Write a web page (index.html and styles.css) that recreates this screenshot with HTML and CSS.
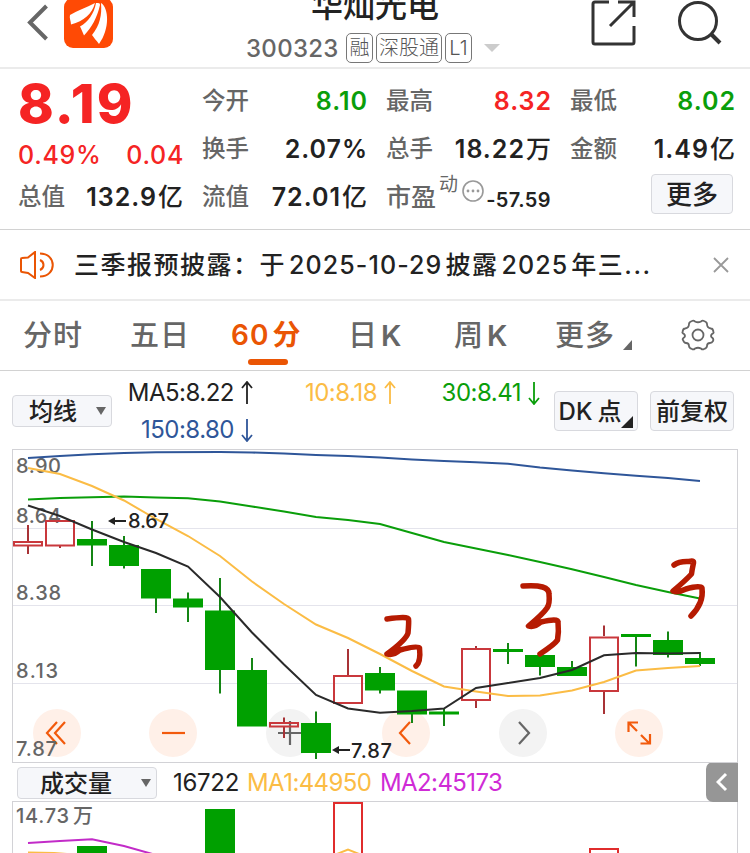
FILE: index.html
```html
<!DOCTYPE html>
<html lang="zh-CN">
<head>
  <meta charset="UTF-8" />
  <meta name="viewport" content="width=device-width, initial-scale=1.0" />
  <title>华灿光电 300323</title>
  <link rel="stylesheet" href="styles.css">
</head>
<body>
  <header class="header">
    <div class="header-left">
      <svg class="back-icon" width="22" height="38" viewBox="0 0 22 38"><path d="M19.500 2 3 18.500l16.500 16.500"/></svg>
      <svg class="logo" width="49" height="50" viewBox="0 0 49 50">
        <rect width="49" height="50" rx="9" fill="#ff4a05"/>
        <path fill="#fff" d="M6 17C14 12 22 10 31 5C28 16 20 23 7 26.500C7 23 5 20 6 17Z"/>
        <path fill="#fff" d="M32 5C35 5 36 5 36 7C33 20 28 29 20 37.500L17 30.500L16 28.500C24 24 30 16 32 5Z"/>
        <path fill="#fff" d="M37 5C45 10 46 31 35 46C32 42 30 40 28 37C36 27 38 17 37 5Z"/>
      </svg>
    </div>
    <div class="stock">
      <h1>华灿光电</h1>
      <div class="stock-sub">
        <span class="code">300323</span>
        <span class="tag">融</span>
        <span class="tag wide">深股通</span>
        <span class="tag">L1</span>
        <svg class="drop" width="16" height="8" viewBox="0 0 16 8"><path d="M0 0h16L8 8z" fill="#ccc"/></svg>
      </div>
    </div>
    <div class="header-right">
      <svg width="46" height="46" viewBox="0 0 46 46"><path d="M18 2H4Q2 2 2 4V42Q2 44 4 44H41Q43 44 43 42V26M27 2H43V17M42 3 19 26"/></svg>
      <svg width="46" height="46" viewBox="0 0 46 46"><circle cx="21" cy="21" r="18.500"/><path d="M34 34 43 43" stroke-width="4"/></svg>
    </div>
  </header>

  <section class="quote">
    <div class="price red">8.19</div>
    <div class="cell"><span>今开</span><b class="green">8.10</b></div>
    <div class="cell"><span>最高</span><b class="red">8.32</b></div>
    <div class="cell"><span>最低</span><b class="green">8.02</b></div>

    <div class="change red"><span>0.49%</span><span>0.04</span></div>
    <div class="cell"><span>换手</span><b>2.07%</b></div>
    <div class="cell"><span>总手</span><b>18.22<i>万</i></b></div>
    <div class="cell"><span>金额</span><b>1.49<i>亿</i></b></div>

    <div class="cell"><span>总值</span><b>132.9<i>亿</i></b></div>
    <div class="cell"><span>流值</span><b>72.01<i>亿</i></b></div>
    <div class="cell pe">
      <span>市盈</span><sup>动</sup>
      <svg width="22" height="22" viewBox="0 0 22 22"><circle cx="11" cy="11" r="10" fill="none" stroke="#999" stroke-width="1.600"/><g fill="#999"><circle cx="6" cy="11" r="1.400"/><circle cx="11" cy="11" r="1.400"/><circle cx="16" cy="11" r="1.400"/></g></svg>
      <b>-57.59</b>
    </div>
    <div class="cell more"><button class="btn">更多</button></div>
  </section>

  <section class="notice">
    <svg class="horn" width="34" height="28" viewBox="0 0 34 28"><path d="M1 8Q1 7 2 7L8 6.500 15 1V27L8 22 2 21Q1 21 1 20ZM20 9a6 5.500 0 0 1 0 10M20 2.500c17 0 17 23 0 23"/></svg>
    <p>三季报预披露：于<em>2025-10-29</em>披露<em>2025</em>年三...</p>
    <svg class="close" width="16" height="16" viewBox="0 0 16 16"><path d="M1 1 15 15M15 1 1 15"/></svg>
  </section>

  <nav class="tabs">
    <a>分时</a>
    <a>五日</a>
    <a class="active">60<i>分</i></a>
    <a>日<i>K</i></a>
    <a>周<i>K</i></a>
    <a class="tab-more">更多<svg width="9" height="10" viewBox="0 0 9 10"><path d="M9 0V10H0z" fill="#666"/></svg></a>
    <svg class="gear" width="34" height="32" viewBox="0 0 34 32"><path d="M11 2Q12.500 1 14 2.500Q17 4 20 2.500Q21.500 1 23 2Q26 3 26 5Q26 9 30 9.500Q32 9.500 32.500 13Q33 14 31 15Q29 17 31 18.500Q33 20 32 22Q31 24 29 24Q26 24 26 27Q26 29 23 30Q21.500 31 20 29.500Q17 28 14 29.500Q12.500 31 11 30Q8 29 8 27Q8 24 5 24Q3 24 2 21Q1 20 3 18.500Q5 17 3 15Q1 14 1.500 13Q2 9.500 4 9.500Q8 9 8 5Q8 3 11 2Z"/><circle cx="17" cy="16" r="5.500"/></svg>
  </nav>

  <section class="ma">
    <button class="btn select"><span>均线</span><svg width="10" height="8" viewBox="0 0 10 8"><path d="M0 0h10L5 8z"/></svg></button>
    <div class="ma-list">
      <span>MA5:8.22<svg width="12" height="24" viewBox="0 0 12 24"><path d="M6 23V1M1 7 6 1 11 7"/></svg></span>
      <span class="yellow">10:8.18<svg width="12" height="24" viewBox="0 0 12 24"><path d="M6 23V1M1 7 6 1 11 7"/></svg></span>
      <span class="green">30:8.41<svg width="12" height="24" viewBox="0 0 12 24"><path d="M6 1V23M1 17 6 23 11 17"/></svg></span>
      <span class="blue">150:8.80<svg width="12" height="24" viewBox="0 0 12 24"><path d="M6 1V23M1 17 6 23 11 17"/></svg></span>
    </div>
    <button class="btn dk"><span>DK<i>点</i></span><svg width="12" height="12" viewBox="0 0 12 12"><path d="M12 0V12H0z" fill="#222"/></svg></button>
    <button class="btn adj"><span>前复权</span></button>
  </section>

  <section class="chart">
    <div class="tools">
      <a><svg viewBox="0 0 48 48"><path d="M24 13 14 24 24 35M32 13 22 24 32 35"/></svg></a>
      <a><svg viewBox="0 0 48 48"><path d="M13 24H36"/></svg></a>
      <a class="grey"><svg viewBox="0 0 48 48"><path d="M12 24H36M24 12V36"/></svg></a>
      <a><svg viewBox="0 0 48 48"><path d="M28 13 18 24 28 35"/></svg></a>
      <a class="grey"><svg viewBox="0 0 48 48"><path d="M20 13 30 24 20 35"/></svg></a>
      <a><svg viewBox="0 0 48 48"><path d="M13.500 23V13.500H23M14 14 22 22M26 26 34 34M35 25V34.500H25.500"/></svg></a>
    </div>
    <svg class="kline" width="726" height="314" viewBox="12 449 726 314">
      <path class="grid" d="M13 528.500H737M13 605.500H737M13 683.500H737"/>
      <g class="axis">
        <text x="16" y="472.500" textLength="45">8.90</text>
        <text x="16" y="522.500" textLength="45">8.64</text>
        <text x="16" y="599.500" textLength="45">8.38</text>
        <text x="16" y="677.500" textLength="42">8.13</text>
        <text x="16" y="755.500" textLength="41">7.87</text>
      </g>
      <!-- falling candles -->
      <path class="wick-down" d="M92 521V566M124 536V568.500M156 569V613M188 592.500V622M220 578V693.500M252 658V726M316 711.500V759M380 667V693.500M412 691V723M444 709V726M508 643V664M540 655V675.500M572 661V675M636 634V666.500M668 631.500V657.500M700 652V666"/>
      <path class="body-down" d="M77 539h30v6.500h-30zM109 545h30v21h-30zM141 569h30v29.500h-30zM173 598.500h30v9h-30zM205 610.500h30v59.500h-30zM237 670h30v56.500h-30zM301 723h30v30h-30zM365 673h30v17.500h-30zM397 690.500h30v24h-30zM429 711.500h30v3h-30zM493 649h30v3h-30zM525 655h30v12h-30zM557 667h30v9h-30zM621 634h30v3h-30zM653 640h30v15h-30zM685 658h30v6h-30z"/>
      <!-- rising candles -->
      <path class="wick-up" d="M28 525V541M28 546V554M60 546V548M284 717.500V722M284 727V738M348 649V675M476 646V648M476 701V708M604 625.500V636M604 692V714"/>
      <path class="body-up" d="M14 542h28v3.500h-28zM46 521h28v24.500h-28zM270 723h28v3.500h-28zM334 676h28v27h-28zM462 649h28v51h-28zM590 637.500h28v53.500h-28z"/>

      <polyline class="line blue" points="28,458 60,456 92,454.200 124,453 156,452.300 220,452 252,452.500 284,453.500 316,455 348,456 380,457.500 412,459.500 444,461 476,462.300 508,463.700 540,467.500 572,470.500 604,473.300 636,475.800 668,478 700,481"/>
      <polyline class="line green" points="28,499.500 60,498 92,497.200 124,496.500 156,497.500 188,498.300 220,501.500 252,506.500 284,511.500 316,517 348,520 380,524 412,533 444,542 476,548.500 508,555 540,562 572,569.300 604,577 636,585 668,592 700,598.500"/>
      <polyline class="line yellow" points="28,468 60,474 92,486 124,500.500 156,519 188,536 220,556 252,581.500 284,604 316,624.500 348,638 380,654 412,671 444,686.500 476,691.500 508,696 540,695.500 572,690.500 604,682 636,670.500 668,668 700,666"/>
      <polyline class="line black" points="28,505.500 60,516 92,529.500 124,542 156,553 188,566.500 220,597 252,632.500 284,664.500 316,695 348,708.500 380,712.700 412,711 444,708.500 476,688 508,683 540,678 572,670 604,655.300 636,653 668,653.500 700,653"/>

      <g class="mark">
        <path d="M110 521H126M334 750H350"/>
        <path class="head" d="M108 521l7-4v8zM332 750l7-4v8z"/>
        <text x="128" y="528" textLength="41">8.67</text>
        <text x="351" y="758" textLength="41">7.87</text>
      </g>

      <g class="pen">
        <path d="M387 619Q408 616 408.500 619Q409 622 408 633Q406 640 387 654Q393 656 400 650Q418 645 419.500 648Q421 662 416 666"/>
        <path d="M523 586Q549 584 549 594Q550 604 547 608Q543 614 528.500 626Q534 628 541 622Q558 618 558 622Q559 632 557.500 640Q555 644 540 654"/>
        <path d="M674 565Q679 561 689 561.500Q694 560 693.500 563Q692 570 691.500 574Q685 581 673 591Q678 593 686 589Q700 585 702 588Q704 603 691 616"/>
      </g>
    </svg>
  </section>

  <section class="vol-bar">
    <button class="btn select"><span>成交量</span><svg width="10" height="8" viewBox="0 0 10 8"><path d="M0 0h10L5 8z"/></svg></button>
    <span class="v0">16722</span>
    <span class="v1 yellow">MA1:44950</span>
    <span class="v2">MA2:45173</span>
    <div class="expand"><svg width="12" height="20" viewBox="0 0 12 20"><path d="M10 2 2 10 10 18"/></svg></div>
  </section>

  <section class="volume">
    <svg width="726" height="52" viewBox="12 801 726 52">
      <text class="axis-text" x="16" y="822.500" textLength="53">14.73</text>
      <text class="axis-text" x="73" y="822.500">万</text>
      <path class="body-down" d="M77 846h30v7h-30zM205 809h30v44h-30z"/>
      <path class="vol-up" d="M334 854V803H362V854M590 854V849H618V854"/>
      <polyline class="line purple" points="28,843 60,841 92,839.300 124,846 156,855"/>
      <polyline class="line yellow" points="28,852.500 54,853 80,855"/>
      <polyline class="line yellow" points="332,856 348,849.500 364,856"/>
    </svg>
  </section>
</body>
</html>
```

FILE: styles.css
```css
* {
  box-sizing: border-box;
}

html, body {
  margin: 0;
  padding: 0;
  overflow: hidden;
}

body {
  width: 750px;
  height: 853px;
  background: #fff;
  color: #222;
  font-family: Inter, "Noto Sans CJK SC", sans-serif;
}

i, em {
  font-style: normal;
}

svg {
  display: block;
  flex: none;
}

.red { color: #f52424; }
.green { color: #0a9e0a; }
.yellow { color: #fbbc45; }
.blue { color: #2f5699; }

/* header */
.header {
  display: grid;
  grid-template-columns: 246px 1fr 159px;
  height: 69px;
  border-bottom: 2px solid #ebebeb;
  overflow: hidden;
}

.header-left {
  display: flex;
  padding-left: 27px;
}

.back-icon {
  margin-top: 4px;
  fill: none;
  stroke: #666;
  stroke-width: 4;
}

.logo {
  margin: -2px 0 0 15px;
}

.stock h1 {
  width: 258px;
  margin: -17px 0 0;
  font-size: 32px;
  line-height: 46px;
  font-weight: 500;
  text-align: center;
}

.stock-sub {
  display: flex;
  align-items: center;
  height: 30px;
  margin-top: 4px;
}

.code {
  width: 100px;
  font-size: 24px;
  font-weight: 500;
  letter-spacing: 0.3px;
  color: #666;
}

.tag {
  height: 30px;
  width: 27px;
  margin-right: 3px;
  border: 1px solid #777;
  border-radius: 5px;
  font-size: 20px;
  line-height: 29px;
  font-weight: 300;
  text-align: center;
  white-space: nowrap;
  color: #555;
}

.tag.wide {
  width: 66px;
}

.drop {
  margin-left: 9px;
}

.header-right {
  display: flex;
  gap: 40px;
  fill: none;
  stroke: #333;
  stroke-width: 3;
}

/* quote */
.quote {
  display: grid;
  grid-template-columns: repeat(4, 164px);
  grid-template-rows: repeat(3, 48px);
  column-gap: 20px;
  height: 161px;
  padding: 8px 0 0 19px;
  border-bottom: 1px solid #d2d2d2;
}

.price {
  margin-left: -1px;
  font-size: 54px;
  line-height: 54px;
  font-weight: 800;
  letter-spacing: 2px;
}

.change, .cell {
  display: flex;
  align-items: center;
  justify-content: space-between;
  line-height: 36px;
  white-space: nowrap;
}

.change {
  padding-top: 11px;
  margin: 0 -1px;
  font-size: 25px;
  font-weight: 500;
  letter-spacing: 0.7px;
}

.cell span {
  margin-left: -1px;
  font-size: 23.5px;
  font-weight: 500;
  color: #666;
}

.cell b {
  margin-right: -1px;
  font-size: 25px;
  font-weight: 600;
  letter-spacing: 1px;
}

.cell b i {
  margin-left: 1px;
  font-weight: 500;
}

.cell.pe {
  justify-content: flex-start;
}

.pe span {
  font-size: 25px;
}

.pe sup {
  margin: -24px 4px 0 3px;
  font-size: 19px;
  line-height: 24px;
  color: #666;
}

.pe svg {
  margin-top: -13px;
}

.pe b {
  margin: 5px 0 0 auto;
  font-size: 20px;
  letter-spacing: 0.4px;
}

.cell.more {
  justify-content: flex-end;
  padding: 0 2px 6px 0;
}

.btn {
  display: flex;
  align-items: center;
  justify-content: center;
  height: 40px;
  width: 84px;
  padding: 0;
  background: #f6f7fa;
  border: 1px solid #d8d9de;
  border-radius: 4px;
  color: #222;
  font-family: inherit;
  font-size: 24px;
  font-weight: 500;
  white-space: nowrap;
}

.btn span {
  margin-top: -3px;
}

.more .btn {
  width: 82px;
  padding-bottom: 3px;
  font-size: 26px;
}

/* notice */
.notice {
  display: flex;
  align-items: center;
  height: 71px;
  padding: 0 21px 0 20px;
  border-bottom: 2px solid #ebebeb;
}

.horn {
  fill: none;
  stroke: #ea5504;
  stroke-width: 2;
}

.notice p {
  width: 590px;
  margin: -4px auto 0 20px;
  font-size: 25px;
  font-weight: 500;
  letter-spacing: 1.5px;
  white-space: nowrap;
}

.notice em {
  margin: 0 3px;
  letter-spacing: 1.1px;
}

.close {
  stroke: #999;
  stroke-width: 1.8;
}

/* tabs */
.tabs {
  display: flex;
  align-items: center;
  height: 70px;
  padding-left: 23px;
  border-bottom: 1px solid #d2d2d2;
}

.tabs a {
  position: relative;
  width: 107px;
  font-size: 29px;
  line-height: 69px;
  font-weight: 500;
  letter-spacing: 1px;
  white-space: nowrap;
  color: #666;
}

.tabs a i {
  margin-left: 3px;
}

.tabs a:nth-child(3) {
  width: 117px;
}

.tabs a:nth-child(4) {
  width: 106px;
}

.tabs a:nth-child(5) {
  width: 101px;
}

.tabs a:nth-child(4) i, .tabs a:nth-child(5) i {
  font-weight: 600;
}

.tabs .active {
  margin-left: -6px;
  font-size: 28px;
  font-weight: 600;
  color: #ea5504;
}

.tabs .active::after {
  content: "";
  position: absolute;
  left: 17px;
  bottom: 5px;
  width: 40px;
  height: 6px;
  border-radius: 3px;
  background: #ea5504;
}

.tabs .tab-more {
  display: flex;
  width: 126px;
}

.tab-more svg {
  margin: 39px 0 0 8px;
}

.gear {
  margin-top: -1px;
  fill: none;
  stroke: #666;
  stroke-width: 1.8;
}

/* moving averages */
.ma {
  display: flex;
  height: 78px;
  padding-left: 12px;
}

.btn.select {
  position: relative;
  justify-content: flex-start;
  width: 100px;
  height: 32px;
  margin-top: 24px;
  padding-left: 16px;
}

.select svg {
  margin-left: auto;
  margin-right: 5px;
  fill: #666;
}

.ma-list {
  display: grid;
  grid-template-columns: 141px 143px 144px;
  grid-template-rows: 37px 37px;
  width: 442px;
  padding-top: 3px;
  font-size: 24px;
  letter-spacing: -0.5px;
}

.ma-list span {
  display: flex;
  align-items: center;
  justify-content: flex-end;
  gap: 7px;
}

.ma-list svg {
  fill: none;
  stroke: currentColor;
  stroke-width: 1.8;
}

.btn.dk, .btn.adj {
  margin-top: 20px;
}

.dk i {
  margin-left: 5px;
}

.dk svg {
  margin-top: 22px;
}

.btn.adj {
  margin-left: 12px;
}

/* k-line chart */
.chart {
  position: relative;
  width: 726px;
  height: 314px;
  margin-left: 12px;
  border: 1px solid #d2d2d6;
}

.kline {
  position: relative;
  margin: -1px;
}

.tools {
  position: absolute;
  left: 20px;
  bottom: 5px;
  display: flex;
  gap: 68.4px;
}

.tools a {
  width: 48px;
  height: 48px;
  border-radius: 50%;
  background: #fff0e8;
}

.tools .grey {
  background: #f3f3f3;
}

.tools svg {
  fill: none;
  stroke: #f25a0c;
  stroke-width: 2.2;
}

.tools .grey svg {
  stroke: #666;
}

.grid {
  stroke: #e4e4ec;
}

.axis, .axis-text {
  font-size: 20px;
  font-weight: 500;
  fill: #666;
}

.wick-down {
  stroke: #148514;
  stroke-width: 2;
}

.body-down {
  fill: #00a000;
}

.wick-up {
  stroke: #a83236;
  stroke-width: 2;
}

.body-up {
  fill: none;
  stroke: #c9383c;
  stroke-width: 2;
}

.line {
  fill: none;
  stroke: currentColor;
  stroke-width: 2;
}

.line.black { color: #2a2a2a; }
.line.purple { color: #c22bc8; }

.mark {
  font-size: 20px;
  font-weight: 500;
  fill: #222;
  stroke-width: 2;
}

.mark path {
  stroke: #222;
}

.mark .head {
  stroke: none;
}

.pen {
  fill: none;
  stroke: #b61b02;
  stroke-width: 5.5;
  stroke-linecap: round;
  stroke-linejoin: round;
}

/* volume */
.vol-bar {
  display: flex;
  align-items: center;
  width: 726px;
  height: 38px;
  margin-left: 12px;
  padding-left: 5px;
  border-right: 1px solid #d2d2d6;
  font-size: 24px;
  letter-spacing: -0.6px;
}

.vol-bar .btn.select {
  width: 140px;
  margin-top: 2px;
  padding-left: 22px;
}

.v0 {
  width: 74px;
  margin-left: 16px;
  letter-spacing: -0.3px;
}

.v1 {
  width: 133px;
}

.v2 {
  color: #cf2bd6;
}

.expand {
  display: flex;
  align-items: center;
  justify-content: center;
  width: 32px;
  height: 40px;
  margin: 0 -1px 0 auto;
  border-radius: 7px 0 0 7px;
  background: #969696;
}

.expand svg {
  fill: none;
  stroke: #fff;
  stroke-width: 3;
}

.volume {
  width: 726px;
  height: 60px;
  margin-left: 12px;
  border: 1px solid #d2d2d6;
}

.volume svg {
  margin: -1px;
}

.vol-up {
  fill: none;
  stroke: #e02c2c;
  stroke-width: 2;
}
```
